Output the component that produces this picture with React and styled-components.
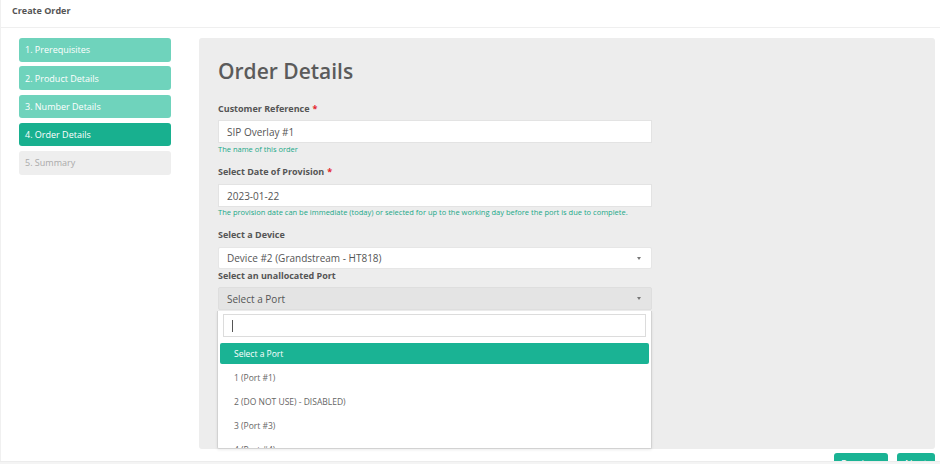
import React from 'react';
import styled, { createGlobalStyle } from 'styled-components';

const GlobalStyle = createGlobalStyle`
  html, body {
    margin: 0;
    padding: 0;
    background: #fff;
  }
  body {
    font-family: "Open Sans", "Liberation Sans", sans-serif;
    color: #555;
  }
  * { box-sizing: border-box; }
`;

const Page = styled.div`
  width: 940px;
  height: 464px;
  overflow: hidden;
  background: #fff;
  border-left: 1px solid #f0f0f0;
`;

const Header = styled.div`
  height: 28px;
  padding: 5px 11px 0;
  border-bottom: 1px solid #efefef;
  font-size: 9px;
  font-weight: 700;
  line-height: 12px;
  color: #555;
`;

const Body = styled.div`
  display: flex;
  align-items: flex-start;
  padding: 10px 5px 0 18px;
`;

const Sidebar = styled.div`
  width: 152px;
  margin-right: 28px;
  display: flex;
  flex-direction: column;
  gap: 4.8px;
`;

const Step = styled.div`
  height: 23.5px;
  border-radius: 3px;
  padding-left: 6px;
  display: flex;
  align-items: center;
  font-size: 9px;
  background: ${p => (p.$state === 'active' ? '#18b08f' : p.$state === 'done' ? '#6fd3bc' : '#eeeeee')};
  color: ${p => (p.$state === 'todo' ? '#aaaaaa' : '#ffffff')};
`;

const Main = styled.div`
  flex: 1;
  display: flex;
  flex-direction: column;
`;

const Panel = styled.div`
  height: 411px;
  background: #ededed;
  border-radius: 3px;
  padding: 21px 19px 0;
  display: flex;
  flex-direction: column;
  align-items: flex-start;
`;

const Title = styled.h2`
  margin: 0 0 19.8px;
  font-size: 21px;
  line-height: 24px;
  font-weight: 600;
  color: #5b5b5b;
`;

const Label = styled.div`
  font-size: 9px;
  line-height: 12px;
  font-weight: 700;
  color: #555;
  margin-bottom: ${p => p.$gap}px;
`;

const Required = styled.span`
  color: #e4262b;
  margin-left: 3px;
`;

const Input = styled.div`
  width: 434px;
  height: 23px;
  background: #fff;
  border: 1px solid #e3e3e3;
  padding-left: 8px;
  display: flex;
  align-items: center;
  font-size: 10px;
  color: #555;
`;

const Help = styled.div`
  font-size: 7.5px;
  line-height: 11px;
  color: #1aa888;
  margin: ${p => p.$top}px 0 ${p => p.$bottom}px;
`;

const SelectWrap = styled.div`
  position: relative;
  width: 434px;
  margin-bottom: ${p => p.$bottom || 0}px;
`;

const Select = styled.div`
  height: ${p => p.$h}px;
  background: ${p => (p.$open ? '#e4e4e4' : '#fff')};
  border: 1px solid ${p => (p.$open ? '#dedede' : '#e6e6e6')};
  border-radius: 2px;
  padding: 0 10px 0 8px;
  display: flex;
  align-items: center;
  justify-content: space-between;
  font-size: 10px;
  color: #555;
`;

const Caret = styled.span`
  width: 0;
  height: 0;
  border-left: 2.5px solid transparent;
  border-right: 2.5px solid transparent;
  border-top: 3px solid #777;
`;

const Dropdown = styled.div`
  position: absolute;
  top: calc(100% + 1px);
  left: -1px;
  right: 0;
  height: 138px;
  background: #fff;
  border: 1px solid #d2d2d2;
  border-top: none;
  border-radius: 0 0 2px 2px;
  box-shadow: 0 1px 3px rgba(0, 0, 0, 0.08);
  padding: 3px 2px 0;
  overflow: hidden;
`;

const Search = styled.div`
  height: 23px;
  margin: 0 3px 5.5px;
  border: 1px solid #dcdcdc;
  display: flex;
  align-items: center;
  padding-left: 8px;
`;

const Cursor = styled.span`
  width: 1px;
  height: 12px;
  background: #555;
`;

const Option = styled.div`
  height: 21px;
  margin-bottom: 3px;
  padding-left: 14px;
  border-radius: 2px;
  display: flex;
  align-items: center;
  font-size: 8.5px;
  background: ${p => (p.$active ? '#1ab394' : 'transparent')};
  color: ${p => (p.$active ? '#fff' : '#666')};
`;

const Actions = styled.div`
  display: flex;
  justify-content: flex-end;
  gap: 9.5px;
  margin-top: 4px;
`;

const Button = styled.div`
  height: 22px;
  padding: 0 ${p => p.$pad}px;
  border-radius: 3px;
  background: #1ab394;
  color: #fff;
  font-size: 10px;
  display: flex;
  align-items: center;
`;

const FooterBar = styled.div`
  position: fixed;
  left: 0;
  right: 0;
  bottom: 0;
  height: 3px;
  background: #f4f4f4;
  border-top: 1px solid #ececec;
`;

const steps = [
  { label: '1. Prerequisites', state: 'done' },
  { label: '2. Product Details', state: 'done' },
  { label: '3. Number Details', state: 'done' },
  { label: '4. Order Details', state: 'active' },
  { label: '5. Summary', state: 'todo' },
];

const ports = ['Select a Port', '1 (Port #1)', '2 (DO NOT USE) - DISABLED)', '3 (Port #3)', '4 (Port #4)'];

export default function App() {
  return (
    <Page>
      <GlobalStyle />
      <Header>Create Order</Header>
      <Body>
        <Sidebar>
          {steps.map(s => (
            <Step key={s.label} $state={s.state}>{s.label}</Step>
          ))}
        </Sidebar>
        <Main>
          <Panel>
            <Title>Order Details</Title>

            <Label $gap={5.5}>Customer Reference<Required>*</Required></Label>
            <Input>SIP Overlay #1</Input>
            <Help $top={1} $bottom={11}>The name of this order</Help>

            <Label $gap={5.8}>Select Date of Provision<Required>*</Required></Label>
            <Input>2023-01-22</Input>
            <Help $top={0.3} $bottom={11}>
              The provision date can be immediate (today) or selected for up to the working day before the port is due to complete.
            </Help>

            <Label $gap={6}>Select a Device</Label>
            <SelectWrap $bottom={1}>
              <Select $h={22}>
                <span>Device #2 (Grandstream - HT818)</span>
                <Caret />
              </Select>
            </SelectWrap>

            <Label $gap={4.5}>Select an unallocated Port</Label>
            <SelectWrap>
              <Select $h={23.3} $open>
                <span>Select a Port</span>
                <Caret />
              </Select>
              <Dropdown>
                <Search><Cursor /></Search>
                {ports.map((p, i) => (
                  <Option key={p} $active={i === 0}>{p}</Option>
                ))}
              </Dropdown>
            </SelectWrap>
          </Panel>
          <Actions>
            <Button $pad={6.5}>Previous</Button>
            <Button $pad={8}>Next</Button>
          </Actions>
        </Main>
      </Body>
      <FooterBar />
    </Page>
  );
}
